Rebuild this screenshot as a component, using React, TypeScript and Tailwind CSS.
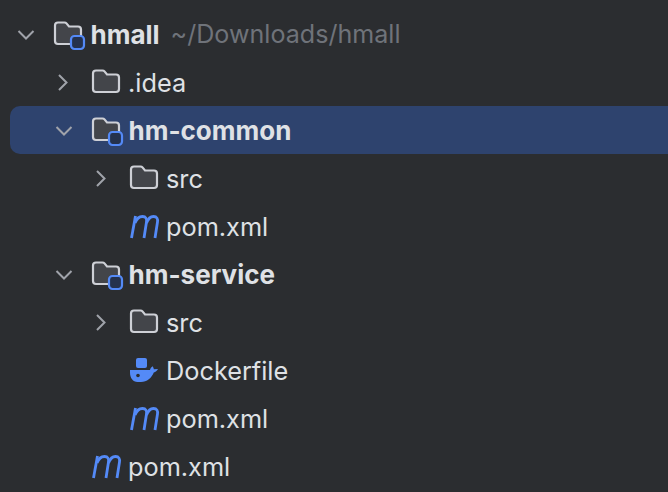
import React from "react";

type Kind = "folder" | "module" | "maven" | "docker";

type Node = {
    level: number;
    name: string;
    kind: Kind;
    open?: boolean;
    hint?: string;
    selected?: boolean;
};

const nodes: Node[] = [
    { level: 0, name: "hmall", kind: "module", open: true, hint: "~/Downloads/hmall" },
    { level: 1, name: ".idea", kind: "folder", open: false },
    { level: 1, name: "hm-common", kind: "module", open: true, selected: true },
    { level: 2, name: "src", kind: "folder", open: false },
    { level: 2, name: "pom.xml", kind: "maven" },
    { level: 1, name: "hm-service", kind: "module", open: true },
    { level: 2, name: "src", kind: "folder", open: false },
    { level: 2, name: "Dockerfile", kind: "docker" },
    { level: 2, name: "pom.xml", kind: "maven" },
    { level: 1, name: "pom.xml", kind: "maven" },
];

const indent = ["pl-0", "pl-[38px]", "pl-[76px]"];

function Chevron({ open }: { open: boolean }) {
    return (
        <svg width="34" height="28" viewBox="0 0 34 28" fill="none" stroke="#a0a3aa" strokeWidth="2">
            {open ? <path d="M8.500 10l7.500 7.500 7.500-7.500" /> : <path d="M11 6l7.500 7.500-7.500 7.500" />}
        </svg>
    );
}

function FolderIcon({ badge }: { badge: boolean }) {
    return (
        <svg width="28" height="28" viewBox="0 0 28 28" fill="none" className="overflow-visible">
            <path
                d="M1 4.500c0-1.700 1.300-3 3-3h6.500c.8 0 1.500.3 2 .9L15 5.500h9c1.700 0 3 1.300 3 3v11.500c0 1.700-1.300 3-3 3H4c-1.700 0-3-1.300-3-3z"
                fill="#43454a"
                stroke="#ced0d6"
                strokeWidth="2.200"
            />
            {badge && <rect x="17" y="15" width="13" height="13" rx="3.500" fill="#25324d" stroke="#548af7" strokeWidth="2.200" />}
        </svg>
    );
}

function MavenIcon() {
    return (
        <svg width="30" height="28" viewBox="0 0 30 28" fill="none" stroke="#548af7" strokeWidth="2.800" className="overflow-visible">
            <path d="M1.500 25L5.500 3" />
            <path d="M5 10c1.500-4 4.500-6.500 7.500-6.500 3.500 0 4.500 2.500 4 5.500L14 25" />
            <path d="M16.500 10c1.500-4 4-6.500 7-6.500 3.500 0 4.500 2.500 4 5.500L25 25" />
        </svg>
    );
}

function DockerIcon() {
    return (
        <svg width="30" height="28" viewBox="0 0 30 28" fill="none">
            <rect x="6" y="1" width="11" height="10" rx="2" fill="#548af7" />
            <path
                d="M0 13h20c.4-1.700 1.400-2.700 2.600-3.700.7 1 1.100 1.900 1.300 3l4.100-.3c-1 2-2.500 3-4.200 3.500C21.500 21 17 25 11 25H7.500C3 25 0 21 0 15.500z"
                fill="#548af7"
            />
            <circle cx="8" cy="18.500" r="1.800" fill="#2b2d30" />
        </svg>
    );
}

function FileIcon({ node }: { node: Node }) {
    if (node.kind === "maven") return <MavenIcon />;
    if (node.kind === "docker") return <DockerIcon />;
    return <FolderIcon badge={node.kind === "module"} />;
}

function Row({ node }: { node: Node }) {
    const isBold = node.kind === "module";
    return (
        <div
            className={`flex h-12 items-center pt-[2px] ${indent[node.level]} ${
                node.selected ? "rounded-l-[10px] bg-[#2e436e]" : ""
            }`}
        >
            <div className="flex w-[34px] shrink-0 items-center justify-center">
                {node.open !== undefined && <Chevron open={node.open} />}
            </div>
            <div className="ml-[10px] w-[28px] shrink-0">
                <FileIcon node={node} />
            </div>
            <span className={`text-[#dfe1e5] ${isBold ? "ml-[8.500px] text-[26px] font-bold" : "ml-[8px] text-[25.300px]"}`}>
                {node.name}
            </span>
            {node.hint && <span className="ml-[11px] text-[25.100px] text-[#6f737a]">{node.hint}</span>}
        </div>
    );
}

export default function App() {
    return (
        <div className="h-[492px] w-[668px] overflow-hidden bg-[#2b2d30] pl-[10px] pt-[10px] font-['Inter',sans-serif] leading-none">
            {nodes.map((node, i) => (
                <Row key={i} node={node} />
            ))}
        </div>
    );
}
